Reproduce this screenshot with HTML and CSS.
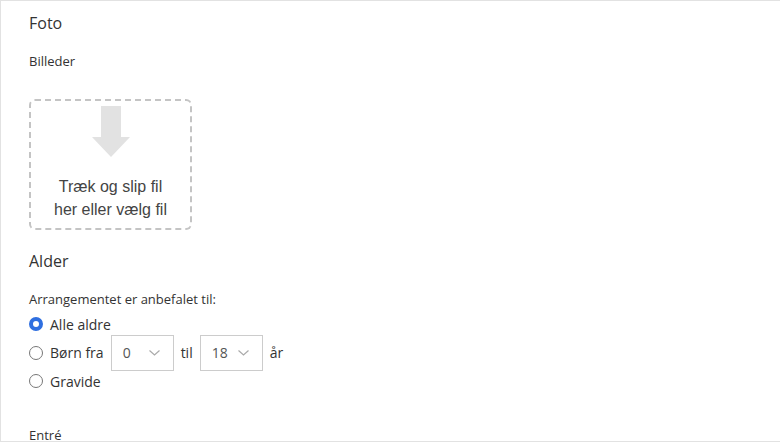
FILE: index.html
```html
<!DOCTYPE html>
<html>

<head>
    <meta charset="UTF-8">
    <meta name="viewport" content="width=device-width">
    <title>Foto og alder</title>
    <link rel="stylesheet" href="styles.css">
</head>

<body>
    <section class="card">
        <h2 class="section-title">Foto</h2>
        <div class="field-label">Billeder</div>
        <div class="dropzone">
            <svg class="drop-arrow" width="40" height="52" viewBox="0 0 40 52">
                <path d="M10 0 H30 V31 H39 L20 51 L1 31 H10 Z" fill="#e2e2e2" />
            </svg>
            <div class="drop-text">Træk og slip fil<br>her eller vælg fil</div>
        </div>

        <h2 class="section-title age-title">Alder</h2>
        <div class="field-label">Arrangementet er anbefalet til:</div>
        <div class="radios">
            <label class="radio">
                <span class="dot checked"></span>
                Alle aldre
            </label>
            <label class="radio">
                <span class="dot"></span>
                Børn fra
                <span class="select">0
                    <svg class="chev" width="11" height="6" viewBox="0 0 11 6">
                        <polyline points="0.5,0.5 5.5,5 10.5,0.5" fill="none" stroke="#aaa" stroke-width="1.2" />
                    </svg>
                </span>
                til
                <span class="select">18
                    <svg class="chev" width="11" height="6" viewBox="0 0 11 6">
                        <polyline points="0.5,0.5 5.5,5 10.5,0.5" fill="none" stroke="#aaa" stroke-width="1.2" />
                    </svg>
                </span>
                år
            </label>
            <label class="radio">
                <span class="dot"></span>
                Gravide
            </label>
        </div>

        <div class="field-label entry">Entré</div>
    </section>
</body>

</html>
```

FILE: styles.css
```css
* {
    box-sizing: border-box;
}

body {
    margin: 0;
    background: #fff;
    font-family: "Open Sans", "Noto Sans", sans-serif;
    color: #333;
}

/*********************/
/* La carte */
/*********************/
.card {
    width: 100%;
    height: 442px;
    border: 1px solid #e2e2e2;
    border-right: none;
    padding: 11px 28px 0;
}

.section-title {
    margin: 0;
    font-size: 16px;
    font-weight: 500;
    line-height: 22px;
}

.field-label {
    margin-top: 18px;
    font-size: 13px;
    line-height: 18px;
}

/*********************/
/* Zone de dépôt */
/*********************/
.dropzone {
    width: 163px;
    height: 131px;
    margin-top: 29px;
    border: 2px dashed #c4c4c4;
    border-radius: 6px;
    display: flex;
    flex-direction: column;
    align-items: center;
    padding-top: 5px;
}

.drop-arrow {
    display: block;
}

.drop-text {
    margin-top: 17px;
    font-family: "Liberation Sans", Arial, sans-serif;
    font-size: 16px;
    line-height: 23px;
    text-align: center;
    color: #444;
}

.age-title {
    margin-top: 20px;
}

/*********************/
/* Boutons radio */
/*********************/
.radios {
    display: flex;
    flex-direction: column;
    margin-top: 2px;
}

.radio {
    display: flex;
    align-items: center;
    gap: 7px;
    font-size: 14px;
    font-weight: 500;
    height: 28.5px;
}

.dot {
    width: 14px;
    height: 14px;
    border-radius: 50%;
    border: 1px solid #777;
    flex: none;
}

.dot.checked {
    border: 4px solid #2f6fe0;
    background: #fff;
}

.select {
    display: flex;
    align-items: center;
    justify-content: space-between;
    width: 63px;
    height: 36px;
    margin: -4px 0;
    border: 1px solid #ccc;
    padding: 0 13px 0 11px;
    font-weight: 400;
    color: #555;
}

.chev {
    display: block;
}

.entry {
    margin-top: 32px;
    line-height: 14px;
}
```
